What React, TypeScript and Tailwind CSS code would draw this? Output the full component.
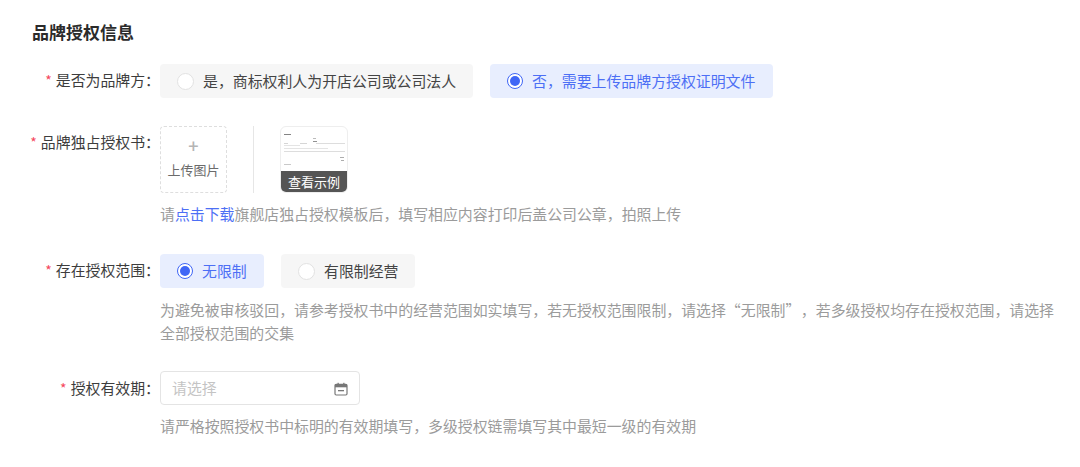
import React from "react";

const FONT = "font-['Noto_Sans_CJK_SC','Liberation_Sans',sans-serif]";
const WATERMARKS = Array.from({ length: 24 }, (_, i) => i);

function Label({ text, tall }: { text: string; tall?: boolean }) {
  return (
    <div className={`w-[160px] shrink-0 flex items-center justify-end text-[14.9px] text-[#3d3d3d] ${tall ? "h-[34px]" : "h-[32px]"}`}>
      <span className="text-[#f5475c] mr-[4px] text-[14px]">*</span>
      <span>{text}：</span>
    </div>
  );
}

function Radio({ text, active, width }: { text: string; active?: boolean; width: string }) {
  return (
    <div
      className={`h-[34px] rounded-[4px] flex items-center pl-[17px] text-[14.9px] ${width} ${
        active ? "bg-[#e8eefe] text-[#4d6ff5]" : "bg-[#f6f6f6] text-[#444444]"
      }`}
    >
      {active ? (
        <span className="w-[16px] h-[16px] rounded-full border border-[#3f66f6] bg-white flex items-center justify-center">
          <span className="w-[10px] h-[10px] rounded-full bg-[#3f66f6]" />
        </span>
      ) : (
        <span className="w-[17px] h-[17px] rounded-full border border-[#e2e2e2] bg-white" />
      )}
      <span className={`whitespace-nowrap ${active ? "ml-[9px]" : "ml-[9px]"}`}>{text}</span>
    </div>
  );
}

function Hint({ children }: { children: React.ReactNode }) {
  return <div className="text-[14.9px] leading-[23px] text-[#9b9b9b] whitespace-nowrap">{children}</div>;
}

function SampleDoc() {
  return (
    <svg width="66" height="44" viewBox="0 0 66 44" className="block">
      <g fill="#777777">
        <rect x="3" y="7" width="7" height="1" opacity="0.9" />
        <rect x="32" y="11" width="3" height="1" opacity="0.5" />
        <rect x="32" y="14" width="4" height="1" opacity="0.8" />
        <rect x="3" y="16" width="4" height="1" opacity="0.3" />
        <rect x="19" y="16" width="7" height="1" opacity="0.3" />
        <rect x="35" y="16" width="29" height="1" opacity="0.25" />
        <rect x="3" y="18" width="16" height="1" opacity="0.2" />
        <rect x="3" y="21" width="44" height="1" opacity="0.2" />
        <rect x="3" y="24" width="61" height="1" opacity="0.25" />
        <rect x="59" y="30" width="4" height="1" opacity="0.6" />
        <rect x="60" y="33" width="3" height="1" opacity="0.6" />
        <rect x="3" y="37" width="7" height="1" opacity="0.4" />
      </g>
    </svg>
  );
}

export default function App() {
  return (
    <div className={`relative w-[1080px] h-[467px] bg-white overflow-hidden ${FONT}`}>
      <h2 className="pt-[20px] pl-[32px] text-[17px] leading-[23px] font-bold text-[#2b2b2b]">品牌授权信息</h2>

      <div className="mt-[21px] flex">
        <Label text="是否为品牌方" />
        <div className="flex gap-[17px]">
          <Radio text="是，商标权利人为开店公司或公司法人" width="w-[313px]" />
          <Radio text="否，需要上传品牌方授权证明文件" active width="w-[283px]" />
        </div>
      </div>

      <div className="mt-[28px] flex">
        <Label text="品牌独占授权书" />
        <div>
          <div className="flex items-stretch">
            <div className="w-[67px] h-[67px] rounded-[4px] border border-dashed border-[#dedede] flex flex-col items-center">
              <span className="mt-[8px] h-[20px] text-[18px] leading-[20px] font-medium text-[#b5b5b5]">+</span>
              <span className="mt-[5px] text-[13px] leading-[20px] text-[#6b6b6b] whitespace-nowrap">上传图片</span>
            </div>
            <div className="ml-[26px] w-px bg-[#e6e6e6]" />
            <div className="ml-[26px] w-[68px] h-[67px] rounded-[6px] border border-[#eeeeee] overflow-hidden flex flex-col">
              <div className="flex-1 min-h-0">
                <SampleDoc />
              </div>
              <div className="h-[21px] bg-[#555555] text-white text-[13px] leading-[21px] text-center whitespace-nowrap">查看示例</div>
            </div>
          </div>
          <div className="mt-[9px]">
            <Hint>
              请<span className="text-[#4d6ff5]">点击下载</span>旗舰店独占授权模板后，填写相应内容打印后盖公司公章，拍照上传
            </Hint>
          </div>
        </div>
      </div>

      <div className="mt-[29px] flex">
        <Label text="存在授权范围" />
        <div className="w-[900px]">
          <div className="flex gap-[17px]">
            <Radio text="无限制" active width="w-[104px]" />
            <Radio text="有限制经营" width="w-[134px]" />
          </div>
          <div className="mt-[10px]">
            <Hint>
              为避免被审核驳回，请参考授权书中的经营范围如实填写，若无授权范围限制，请选择“无限制”<span className="ml-[8px]">，若多级授权均存在授权范围，请选择</span>
              <br />
              全部授权范围的交集
            </Hint>
          </div>
        </div>
      </div>

      <div className="mt-[27px] flex">
        <Label text="授权有效期" tall />
        <div>
          <div className="w-[200px] h-[34px] rounded-[4px] border border-[#e4e4e4] flex items-center justify-between pl-[11px] pr-[11px]">
            <span className="pt-[1px] text-[14.9px] text-[#c4c4c4]">请选择</span>
            <svg width="14" height="14" viewBox="0 0 14 14" fill="none" className="mt-[1px]">
              <path d="M1 3.5A1.2 1.2 0 0 1 2.2 2.3H11.8A1.2 1.2 0 0 1 13 3.5V11.8A1.2 1.2 0 0 1 11.8 13H2.2A1.2 1.2 0 0 1 1 11.8Z" stroke="#777777" strokeWidth="1.2" />
              <rect x="1" y="2.3" width="12" height="3" fill="#777777" />
              <rect x="3.5" y="0.8" width="1.3" height="2" fill="#777777" />
              <rect x="9.2" y="0.8" width="1.3" height="2" fill="#777777" />
              <rect x="4" y="8" width="6" height="1.3" fill="#777777" />
            </svg>
          </div>
          <div className="mt-[9px]">
            <Hint>请严格按照授权书中标明的有效期填写，多级授权链需填写其中最短一级的有效期</Hint>
          </div>
        </div>
      </div>

      {/* faint account watermark over the whole page */}
      <div className="absolute left-[-113px] top-[-60px] grid grid-cols-[repeat(6,228px)] auto-rows-[138px] pointer-events-none select-none">
        {WATERMARKS.map((i) => (
          <div key={i} className="flex items-center justify-center">
            <span className="-rotate-[20deg] whitespace-nowrap font-['Liberation_Sans',sans-serif] text-[17px] text-black/[0.025]">
              xuewelwen1-698652
            </span>
          </div>
        ))}
      </div>
    </div>
  );
}
